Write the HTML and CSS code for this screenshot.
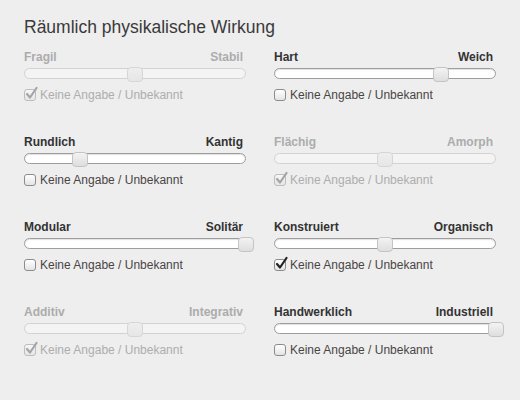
FILE: index.html
```html
<!DOCTYPE html>
<html lang="de">
<head>
<meta charset="utf-8">
<title>Räumlich physikalische Wirkung</title>
<link rel="stylesheet" href="styles.css">
</head>
<body>
<div class="page">
  <h1 class="title">Räumlich physikalische Wirkung</h1>
  <div class="grid">
    <div class="item disabled">
      <div class="labels"><span>Fragil</span><span>Stabil</span></div>
      <div class="slider"><div class="track"></div><div class="thumb" style="left:50%"></div></div>
      <label class="check"><span class="box checked"><svg viewBox="0 0 14 14"><path d="M3 7 L6 10.5 L12.5 1"/></svg></span>Keine Angabe / Unbekannt</label>
    </div>
    <div class="item">
      <div class="labels"><span>Hart</span><span>Weich</span></div>
      <div class="slider"><div class="track"></div><div class="thumb" style="left:75%"></div></div>
      <label class="check"><span class="box"></span>Keine Angabe / Unbekannt</label>
    </div>
    <div class="item">
      <div class="labels"><span>Rundlich</span><span>Kantig</span></div>
      <div class="slider"><div class="track"></div><div class="thumb" style="left:25%"></div></div>
      <label class="check"><span class="box"></span>Keine Angabe / Unbekannt</label>
    </div>
    <div class="item disabled">
      <div class="labels"><span>Flächig</span><span>Amorph</span></div>
      <div class="slider"><div class="track"></div><div class="thumb" style="left:50%"></div></div>
      <label class="check"><span class="box checked"><svg viewBox="0 0 14 14"><path d="M3 7 L6 10.5 L12.5 1"/></svg></span>Keine Angabe / Unbekannt</label>
    </div>
    <div class="item">
      <div class="labels"><span>Modular</span><span>Solitär</span></div>
      <div class="slider"><div class="track"></div><div class="thumb" style="left:100%"></div></div>
      <label class="check"><span class="box"></span>Keine Angabe / Unbekannt</label>
    </div>
    <div class="item">
      <div class="labels"><span>Konstruiert</span><span>Organisch</span></div>
      <div class="slider"><div class="track"></div><div class="thumb" style="left:50%"></div></div>
      <label class="check"><span class="box checked"><svg viewBox="0 0 14 14"><path d="M3 7 L6 10.5 L12.5 1"/></svg></span>Keine Angabe / Unbekannt</label>
    </div>
    <div class="item disabled">
      <div class="labels"><span>Additiv</span><span>Integrativ</span></div>
      <div class="slider"><div class="track"></div><div class="thumb" style="left:50%"></div></div>
      <label class="check"><span class="box checked"><svg viewBox="0 0 14 14"><path d="M3 7 L6 10.5 L12.5 1"/></svg></span>Keine Angabe / Unbekannt</label>
    </div>
    <div class="item">
      <div class="labels"><span>Handwerklich</span><span>Industriell</span></div>
      <div class="slider"><div class="track"></div><div class="thumb" style="left:100%"></div></div>
      <label class="check"><span class="box"></span>Keine Angabe / Unbekannt</label>
    </div>
  </div>
</div>
</body>
</html>
```
FILE: styles.css
```css
html, body {
  margin: 0;
  padding: 0;
  background: #eeeeee;
}
body {
  font-family: "Liberation Sans", Arial, Helvetica, sans-serif;
  width: 520px;
  height: 400px;
  overflow: hidden;
}
.page {
  padding: 16px 24px 0 24px;
}
.title {
  margin: 0;
  font-size: 17.5px;
  line-height: 22px;
  font-weight: normal;
  color: #3a3a3a;
}
.grid {
  margin-top: 12px;
  display: grid;
  grid-template-columns: 222px 222px;
  column-gap: 28px;
  row-gap: 34px;
}
.item {
  display: flex;
  flex-direction: column;
}
.labels {
  display: flex;
  justify-content: space-between;
  font-size: 12px;
  line-height: 14px;
  font-weight: bold;
  color: #333333;
  padding-right: 3px;
}
.slider {
  position: relative;
  margin-top: 4px;
  height: 11px;
}
.track {
  height: 11px;
  box-sizing: border-box;
  border: 1px solid #9d9d9d;
  border-radius: 6px;
  background: #ffffff;
  box-shadow: inset 0 1px 1px rgba(0,0,0,0.12);
}
.thumb {
  position: absolute;
  top: -1px;
  width: 16px;
  height: 15px;
  margin-left: -8px;
  box-sizing: border-box;
  border: 1px solid #c4c4c4;
  border-radius: 4px;
  background: linear-gradient(#f3f3f3, #dedede);
}
.check {
  display: flex;
  align-items: center;
  margin-top: 10px;
  height: 12px;
  font-size: 12px;
  line-height: 12px;
  color: #4a4545;
}
.box {
  position: relative;
  width: 12px;
  height: 12px;
  box-sizing: border-box;
  margin-right: 4px;
  border: 1px solid #8c8c8c;
  border-radius: 3px;
  background: linear-gradient(#ffffff, #e4e4e4);
  flex: none;
}
.box svg {
  position: absolute;
  left: -1px;
  top: -3px;
  width: 14px;
  height: 14px;
  overflow: visible;
}
.box svg path {
  fill: none;
  stroke: #222222;
  stroke-width: 2.2;
  stroke-linecap: round;
  stroke-linejoin: round;
}
.disabled .labels {
  color: #acacac;
}
.disabled .track {
  border-color: #d2d2d2;
  background: #f4f4f4;
  box-shadow: none;
}
.disabled .thumb {
  border-color: #d6d6d6;
  background: linear-gradient(#eeeeee, #e6e6e6);
}
.disabled .check {
  color: #adadad;
}
.disabled .box {
  border-color: #bdbdbd;
  background: linear-gradient(#f6f6f6, #e6e6e6);
}
.disabled .box svg path {
  stroke: #a5a5a5;
}
```
